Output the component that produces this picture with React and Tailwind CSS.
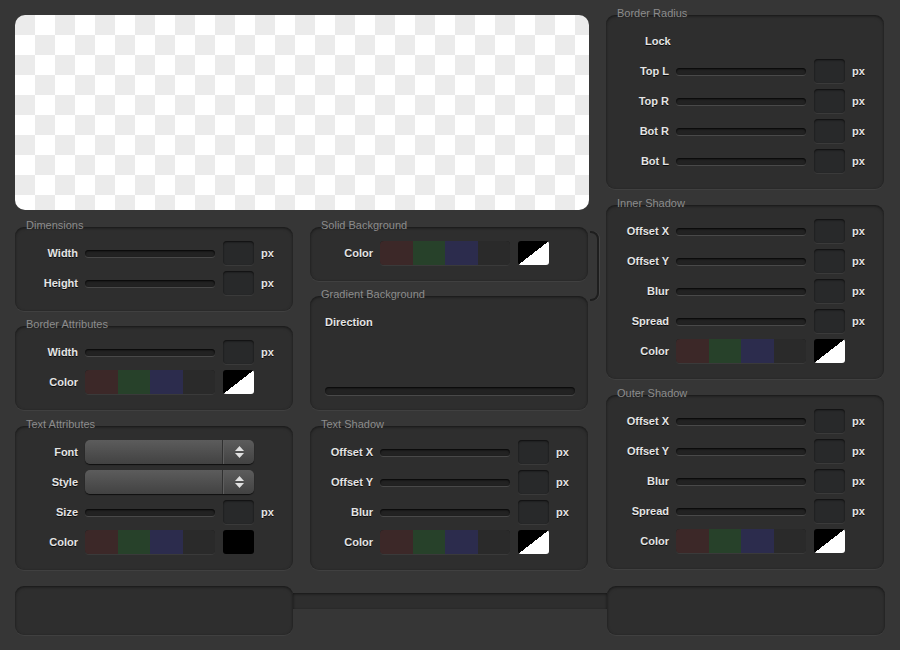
// App.jsx — CSS3 box generator panel

const font = "font-['Liberation_Sans',Arial,sans-serif]"
const labelCls = `text-[11px] font-bold text-[#e4e4e4] [text-shadow:0_1px_0_rgba(0,0,0,0.8)] ${font}`

const panelCls = 'rounded-[9px] bg-[#2e2e2e] shadow-[inset_0_1px_3px_rgba(0,0,0,0.55),0_1px_0_rgba(255,255,255,0.05)]'
const trackCls = 'h-[7px] rounded-full bg-[#222222] shadow-[inset_0_1px_2px_rgba(0,0,0,0.9),0_1px_0_rgba(255,255,255,0.13)]'
const boxCls = 'w-[31px] h-[24px] rounded-[4px] bg-[#28292a] shadow-[inset_0_1px_2px_rgba(0,0,0,0.7),0_1px_0_rgba(255,255,255,0.06)]'

function Section({ title, className = '', panel = '', children }) {
  return (
    <div className={className}>
      <p className={`relative z-10 -mb-[4px] pl-[11px] text-[11px] leading-[12px] text-[#8c8c8c] ${font}`}>
        {title}
      </p>
      <div className={`${panelCls} pt-[14px] pb-[16px] flex flex-col gap-[6px] ${panel}`}>
        {children}
      </div>
    </div>
  )
}

function Label({ children }) {
  return <span className={`w-[63px] shrink-0 text-right ${labelCls}`}>{children}</span>
}

function SliderRow({ label }) {
  return (
    <div className="flex items-center h-[24px]">
      <Label>{label}</Label>
      <div className={`ml-[7px] w-[130px] ${trackCls}`} />
      <div className={`ml-[8px] ${boxCls}`} />
      <span className={`ml-[7px] ${labelCls}`}>px</span>
    </div>
  )
}

function ColorRow({ solid }) {
  return (
    <div className="flex items-center h-[24px]">
      <Label>Color</Label>
      <div className="ml-[7px] w-[130px] h-[24px] flex rounded-[4px] overflow-hidden shadow-[inset_0_1px_2px_rgba(0,0,0,0.6),0_1px_0_rgba(255,255,255,0.06)]">
        <div className="flex-1 bg-[#3c2828]" />
        <div className="flex-1 bg-[#27412a]" />
        <div className="flex-1 bg-[#2c2c4d]" />
        <div className="flex-1 bg-[#2a2a2a]" />
      </div>
      {solid ? (
        <div className="ml-[8px] w-[31px] h-[24px] rounded-[3px] bg-black" />
      ) : (
        <div className="ml-[8px] w-[31px] h-[24px] rounded-[3px] bg-[linear-gradient(to_bottom_right,#000_50%,#fff_50%)]" />
      )}
    </div>
  )
}

function SelectRow({ label }) {
  return (
    <div className="flex items-center h-[24px]">
      <Label>{label}</Label>
      <div className="ml-[7px] w-[169px] h-[24px] flex rounded-[5px] bg-[linear-gradient(#5c5c5c,#424242)] shadow-[0_1px_1px_rgba(0,0,0,0.7)]">
        <div className="flex-1 border-r border-[#303030]" />
        <div className="w-[31px] flex flex-col items-center justify-center gap-[2px] border-l border-[#5e5e5e]">
          <svg width="9" height="5" viewBox="0 0 9 5"><path d="M4.5 0L9 5H0z" fill="#e0e0e0" /></svg>
          <svg width="9" height="5" viewBox="0 0 9 5"><path d="M0 0h9L4.5 5z" fill="#e0e0e0" /></svg>
        </div>
      </div>
    </div>
  )
}

export default function App() {
  return (
    <div className="w-[900px] h-[650px] bg-[#363636] px-[15px] pt-[7px] overflow-hidden">
      <div className="flex gap-[18px]">
        {/* Left area: preview + two columns */}
        <div className="w-[573px] pt-[8px]">
          <div className="h-[195px] w-[574px] rounded-[10px] bg-[conic-gradient(#fff_25%,#ebebeb_0_50%,#fff_0_75%,#ebebeb_0)] bg-[length:40px_40px]" />

          <div className="mt-[9px] flex gap-[17px]">
            <div className="w-[278px] flex flex-col gap-[7px]">
              <Section title="Dimensions">
                <SliderRow label="Width" />
                <SliderRow label="Height" />
              </Section>
              <Section title="Border Attributes">
                <SliderRow label="Width" />
                <ColorRow />
              </Section>
              <Section title="Text Attributes" className="mt-[1px]">
                <SelectRow label="Font" />
                <SelectRow label="Style" />
                <SliderRow label="Size" />
                <ColorRow solid />
              </Section>
            </div>

            <div className="relative w-[278px] flex flex-col gap-[7px]">
              <Section title="Solid Background">
                <ColorRow />
              </Section>
              <Section title="Gradient Background" panel="h-[114px] !pb-[15px] px-[15px]">
                <div className="h-[24px] flex items-center">
                  <span className={labelCls}>Direction</span>
                </div>
                <div className={`mt-auto h-[8px] w-[250px] ${trackCls}`} />
              </Section>
              <Section title="Text Shadow" className="mt-[1px]">
                <SliderRow label="Offset X" />
                <SliderRow label="Offset Y" />
                <SliderRow label="Blur" />
                <ColorRow />
              </Section>
              {/* bracket joining solid / gradient */}
              <div className="absolute left-[280px] top-[12px] w-[9px] h-[70px] rounded-r-[8px] border-2 border-l-0 border-[#1e1e1e] shadow-[1px_0_0_rgba(255,255,255,0.08)]" />
            </div>
          </div>
        </div>

        {/* Right column */}
        <div className="w-[278px] flex flex-col gap-[8px]">
          <Section title="Border Radius">
            <div className="h-[24px] flex items-center">
              <span className={`ml-[39px] ${labelCls}`}>Lock</span>
            </div>
            <SliderRow label="Top L" />
            <SliderRow label="Top R" />
            <SliderRow label="Bot R" />
            <SliderRow label="Bot L" />
          </Section>
          <Section title="Inner Shadow">
            <SliderRow label="Offset X" />
            <SliderRow label="Offset Y" />
            <SliderRow label="Blur" />
            <SliderRow label="Spread" />
            <ColorRow />
          </Section>
          <Section title="Outer Shadow">
            <SliderRow label="Offset X" />
            <SliderRow label="Offset Y" />
            <SliderRow label="Blur" />
            <SliderRow label="Spread" />
            <ColorRow />
          </Section>
        </div>
      </div>

      {/* Bottom bar */}
      <div className="mt-[16px] flex items-start">
        <div className={`w-[278px] h-[49px] ${panelCls}`} />
        <div className="flex-1 h-[16px] mt-[7px] bg-[#2e2e2e] shadow-[inset_0_1px_3px_rgba(0,0,0,0.55)]" />
        <div className={`w-[278px] h-[49px] ${panelCls}`} />
      </div>
    </div>
  )
}
